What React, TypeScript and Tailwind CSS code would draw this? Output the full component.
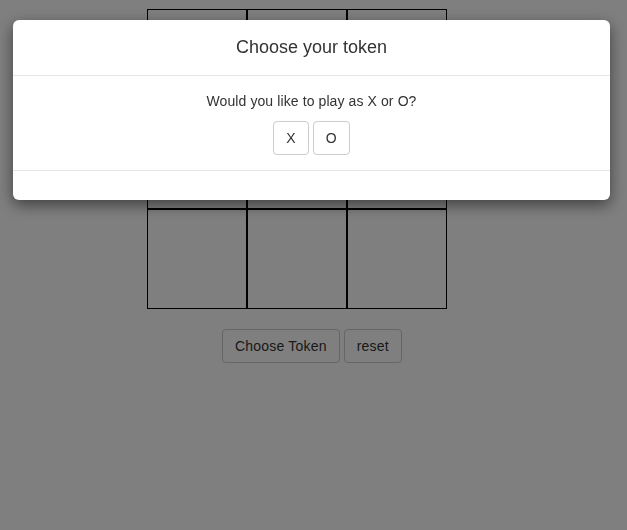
export default function App() {
  const cells = Array.from({ length: 9 }, (_, i) => i);

  return (
    <div className="relative min-h-[530px] bg-white font-['Liberation_Sans',Arial,sans-serif] text-[14px] leading-[20px] tracking-[0.1px] text-[#333]">
      <div className="pl-[147px] pt-[9px]">
        <div className="grid w-[300px] grid-cols-[repeat(3,100px)]">
          {cells.map((c) => (
            <div key={c} className="h-[100px] w-[100px] border border-black" />
          ))}
        </div>
        <div className="mt-[20px] flex gap-[4px] pl-[75px]">
          <button className="h-[34px] rounded-[4px] border border-[#ccc] bg-white px-[12px] tracking-[0.2px] text-[#333]">Choose Token</button>
          <button className="h-[34px] rounded-[4px] border border-[#ccc] bg-white px-[12px] tracking-[0.2px] text-[#333]">reset</button>
        </div>
      </div>

      {/* modal backdrop + dialog */}
      <div className="fixed inset-0 bg-black/50" />
      <div className="fixed inset-x-0 top-0 pl-[13px] pr-[17px] pt-[20px]">
        <div className="rounded-[6px] bg-white shadow-[0_5px_15px_rgba(0,0,0,0.5)]">
          <div className="border-b border-[#e5e5e5] p-[15px] text-center">
            <h4 className="text-[18px] leading-[25px] tracking-normal text-[#333]">Choose your token</h4>
          </div>
          <div className="p-[15px] text-center">
            <p>Would you like to play as X or O?</p>
            <div className="mt-[10px] flex justify-center gap-[4px]">
              <button className="h-[34px] rounded-[4px] border border-[#ccc] bg-white px-[12px] text-[#333]">X</button>
              <button className="h-[34px] rounded-[4px] border border-[#ccc] bg-white px-[12px] text-[#333]">O</button>
            </div>
          </div>
          <div className="h-[30px] border-t border-[#e5e5e5]" />
        </div>
      </div>
    </div>
  );
}
